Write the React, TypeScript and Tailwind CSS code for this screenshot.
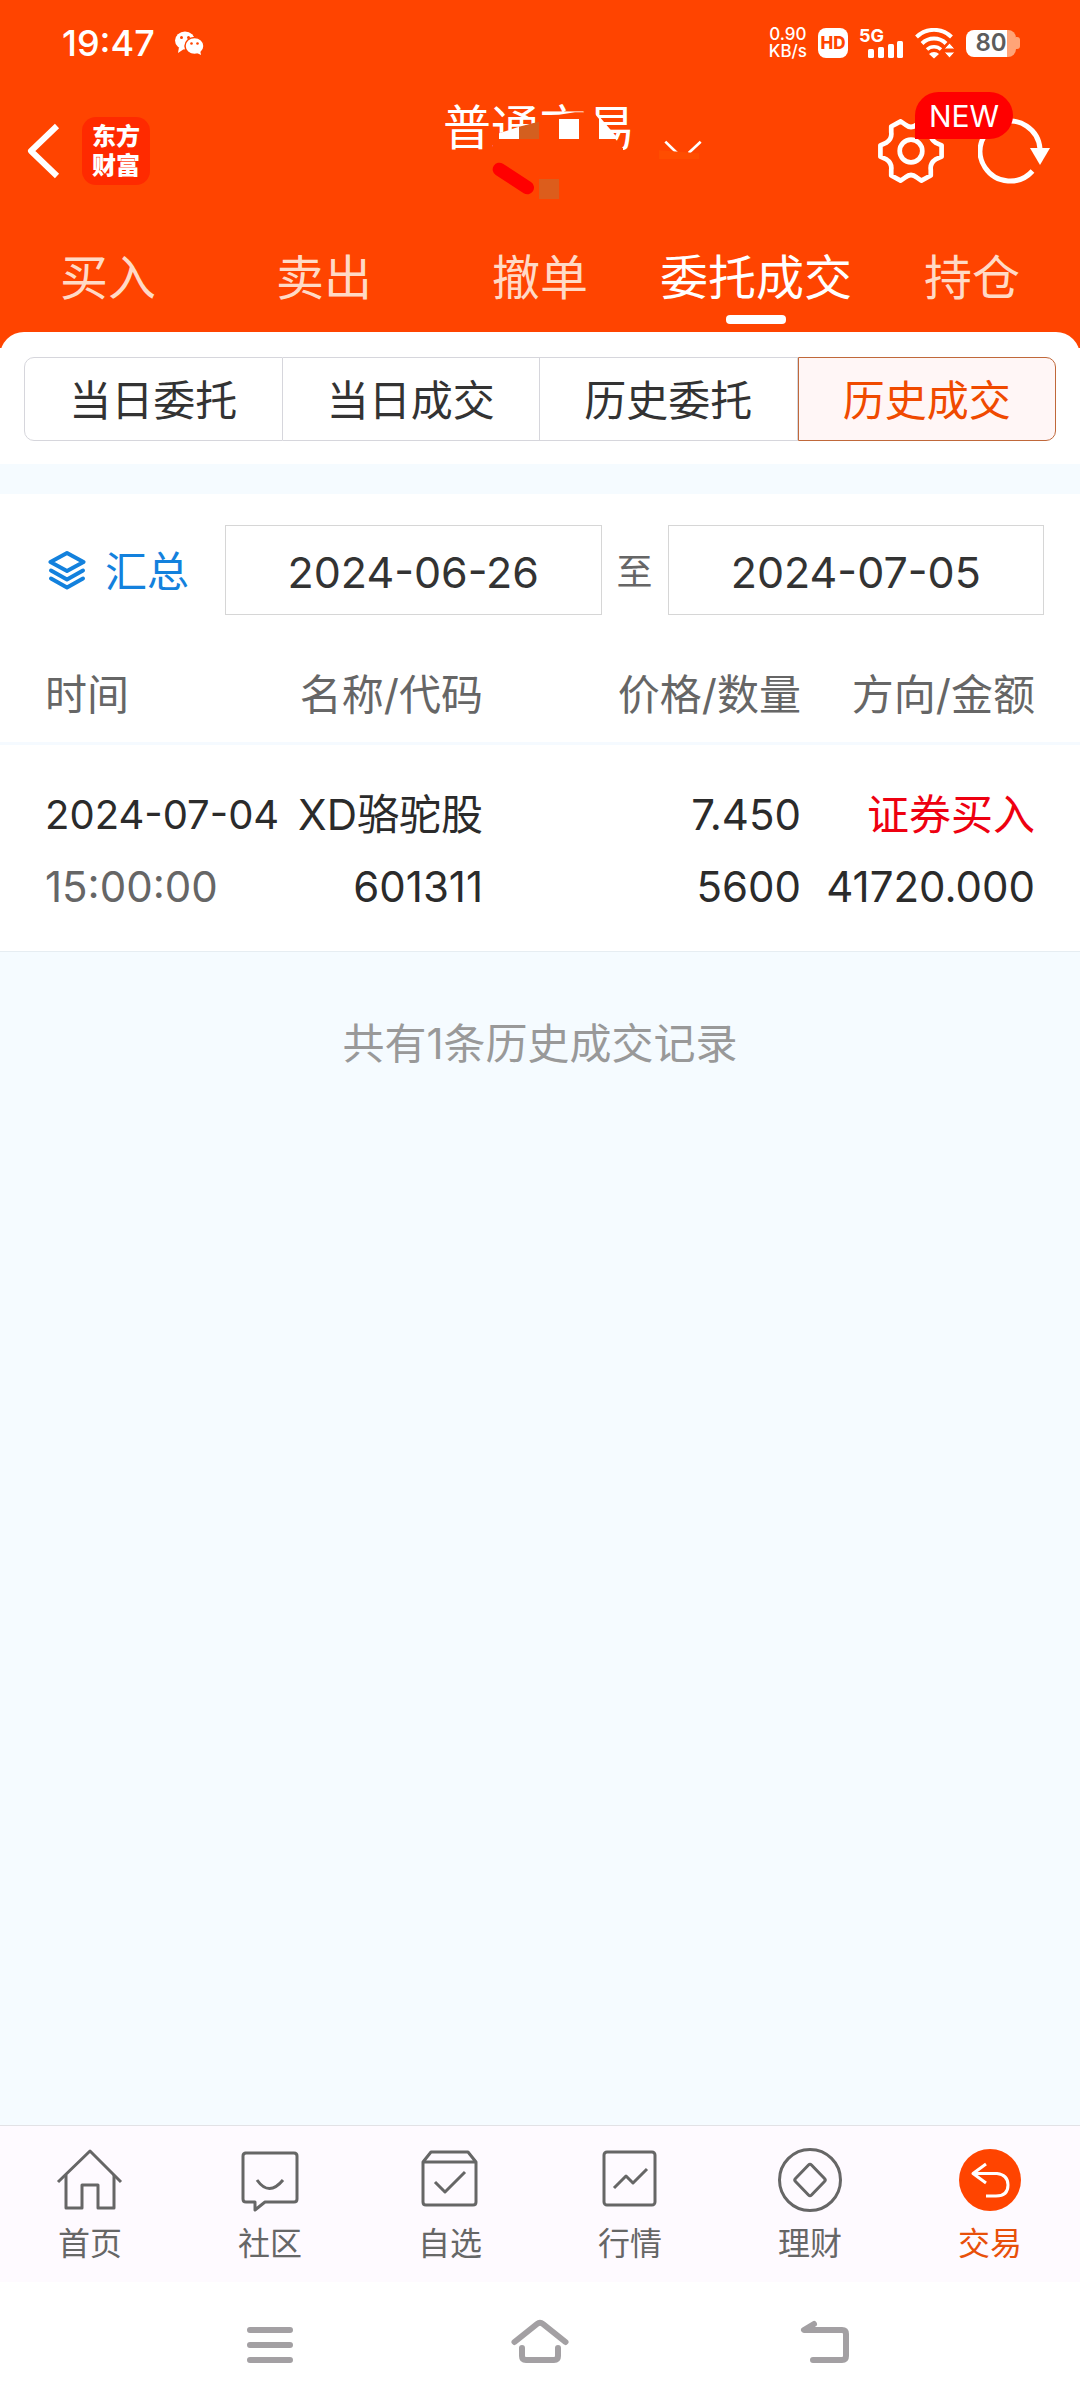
import React from "react";

const tabs = ["买入", "卖出", "撤单", "委托成交", "持仓"];
const segments = ["当日委托", "当日成交", "历史委托", "历史成交"];

function StatusBar() {
  return (
    <div className="flex h-[86px] items-center justify-between pl-[62px] pr-[60px] text-white">
      <div className="flex items-center gap-5">
        <span className="text-[36px] leading-none font-medium">19:47</span>
        <svg width="30" height="26" viewBox="0 0 30 26" aria-label="微信">
          <path d="M4 17 3 23 9 19Z" fill="#fff" />
          <ellipse cx="10" cy="10.500" rx="10" ry="9" fill="#fff" />
          <circle cx="6.500" cy="7.500" r="1.500" fill="#ff4400" />
          <circle cx="13.500" cy="7.500" r="1.500" fill="#ff4400" />
          <ellipse cx="19.500" cy="16" rx="9.500" ry="8.500" fill="#fff" stroke="#ff4400" strokeWidth="1.500" />
          <path d="m20 22 6 3-1-5Z" fill="#fff" />
          <circle cx="16.500" cy="13.500" r="1.300" fill="#ff4400" />
          <circle cx="22.500" cy="13.500" r="1.300" fill="#ff4400" />
        </svg>
      </div>
      <div className="flex items-center gap-[11px]">
        <div className="flex flex-col items-center text-[17px] leading-[17px] font-medium">
          <span>0.90</span>
          <span>KB/s</span>
        </div>
        <div className="flex size-[30px] items-center justify-center rounded-[8px] bg-white text-[17px] leading-none font-extrabold text-[#ff4400]">
          HD
        </div>
        <div className="relative h-[32px] w-[45px]">
          <span className="absolute left-0 top-0 text-[18px] leading-[18px] font-bold">5G</span>
          <svg className="absolute inset-0" width="45" height="32" viewBox="0 0 45 32" fill="#fff">
            <rect x="9" y="22" width="6" height="9" rx="1.500" />
            <rect x="19" y="20" width="6" height="11" rx="1.500" />
            <rect x="29" y="17" width="6" height="14" rx="1.500" />
            <rect x="38" y="14" width="6" height="17" rx="1.500" />
          </svg>
        </div>
        <svg width="40" height="31" viewBox="0 0 40 31" fill="none" stroke="#fff" strokeWidth="4">
          <path d="M1.500 9a25 25 0 0 1 35 0" />
          <path d="M7 15.500a17 17 0 0 1 24 0" />
          <path d="M12 21.500a10 10 0 0 1 14 0" strokeWidth="3.500" />
          <path d="m14 26 5 4.500 5-4.500a7 7 0 0 0-10 0Z" fill="#fff" stroke="none" />
          <path d="M29 21h11l-5.500-6ZM29 24h11l-5.500 6Z" fill="#fff" stroke="#ff4400" strokeWidth="1" />
        </svg>
        <div className="flex items-center">
          <div className="flex h-[27px] w-[50px] items-center justify-center overflow-hidden rounded-[8px] bg-linear-to-r from-white from-82% to-[#ffa477] to-82% text-[24px] leading-none font-semibold text-[#5c5c5c]">
            80
          </div>
          <div className="h-3 w-1 rounded-r-[3px] bg-[#ffa477]" />
        </div>
      </div>
    </div>
  );
}

function TitleBar() {
  return (
    <div className="grid h-[130px] grid-cols-[1fr_auto_1fr] items-center pl-[26px] pr-[28px]">
      <div className="flex items-center gap-[22px]">
        <button type="button" aria-label="返回">
          <svg width="34" height="56" viewBox="0 0 34 56" fill="none" stroke="#fff" strokeWidth="6">
            <path d="M31 3 5 28l26 25" strokeLinejoin="round" />
          </svg>
        </button>
        <div className="flex size-[68px] flex-col items-center justify-center rounded-[14px] bg-[#ff2a00] text-[24px] leading-[29px] font-black text-white">
          <span>东方</span>
          <span>财富</span>
        </div>
      </div>
      <button type="button" className="relative mb-[46px] text-[48px] leading-[56px] text-white">
        普通交易
        <svg className="absolute -left-6 -top-5" width="320" height="130" viewBox="0 0 960 390">
          <path d="M222 168 240 160 360 125 370 106 420 104 468 97H490L526 100 612 205V225H222Z" fill="#ff4400" />
          <path d="M240 160 300 140V177H240Z" fill="#fff" />
          <path d="M300 140 360 125V177H300Z" fill="#d45f1f" />
          <path d="M420 117h60v60h-60Z" fill="#fff" />
          <path d="M540 108 598 177H540Z" fill="#fff" />
          <path d="m739 185 35 34M845 185l-36 34" stroke="#fff" strokeWidth="8" fill="none" />
          <path d="M720 211 840 220V237H720Z" fill="#ff4d00" />
          <path d="m241 268 84 55" stroke="#ff0000" strokeWidth="40" strokeLinecap="round" />
          <path d="M360 297h60v60h-60Z" fill="#dc5d1c" />
        </svg>
      </button>
      <div className="flex items-center justify-end gap-[34px]">
        <button type="button" aria-label="设置" className="relative">
          <svg width="66" height="64" viewBox="0 0 70 68" fill="none" stroke="#fff" strokeWidth="5" strokeLinejoin="round">
            <path d="M2.500 28V40L9 43Q15 47 14 54V60L24 65.500 29 62Q35 57 41 62L46 65.500 56 60V54Q55 47 61 43L67.500 40V28L61 25Q55 21 56 14V8L46 2.500 41 6Q35 11 29 6L24 2.500 14 8V14Q15 21 9 25Z" />
            <circle cx="35" cy="34" r="12" />
          </svg>
          <span className="absolute -top-[27px] left-[37px] z-10 flex h-[47px] w-[98px] items-center justify-center rounded-full rounded-bl-none bg-[#ff0000] text-[30px] leading-none text-white">
            NEW
          </span>
        </button>
        <button type="button" aria-label="刷新">
          <svg width="74" height="68" viewBox="0 0 74 68" fill="none" stroke="#fff" strokeWidth="5">
            <path d="M54.500 54A30 30 0 1 1 62 32" />
            <path d="M52 31h20L62 48Z" fill="#fff" stroke="none" />
          </svg>
        </button>
      </div>
    </div>
  );
}

function Tabs() {
  return (
    <nav className="grid h-[132px] grid-cols-5">
      {tabs.map((t) => (
        <button
          key={t}
          type="button"
          className={
            t === "委托成交"
              ? "flex flex-col items-center pt-[32px] text-[48px] leading-[60px] whitespace-nowrap text-white"
              : "flex flex-col items-center pt-[32px] text-[48px] leading-[60px] whitespace-nowrap text-[#ffdac6]"
          }
        >
          {t}
          {t === "委托成交" && <span className="mt-[7px] h-[9px] w-[60px] rounded-[4px] bg-white" />}
        </button>
      ))}
    </nav>
  );
}

function Segments() {
  return (
    <div className="-mt-4 flex rounded-t-[24px] bg-white px-6 pt-[25px] pb-[23px]">
      {segments.map((s, i) => (
        <button
          key={s}
          type="button"
          className={
            i === 3
              ? "h-[84px] flex-1 rounded-r-[10px] border border-[#c0683a] bg-[#fff6f6] pt-1 text-[42px] leading-none text-[#f04a00]"
              : i === 0
                ? "h-[84px] flex-1 rounded-l-[10px] border border-[#d6d6dc] pt-1 text-[42px] leading-none text-[#333333]"
                : "h-[84px] flex-1 border-y border-r border-[#d6d6dc] pt-1 text-[42px] leading-none text-[#333333]"
          }
        >
          {s}
        </button>
      ))}
    </div>
  );
}

function Filters() {
  return (
    <div className="flex items-center pt-[31px] pr-9 pl-12">
      <button type="button" className="mr-9 flex items-center gap-[19px] text-[42px] leading-none whitespace-nowrap text-[#1381dd]">
        <svg width="38" height="40" viewBox="0 0 38 40" fill="none" stroke="#1381dd" strokeWidth="4" strokeLinejoin="round" strokeLinecap="round">
          <path d="M19 3 35.500 12 19 21 2.500 12Z" />
          <path d="M3 20.500 19 29.500 35 20.500M3 28.500 19 37.500 35 28.500" />
        </svg>
        <span className="pt-1">汇总</span>
      </button>
      <input
        type="text"
        readOnly
        aria-label="开始日期"
        defaultValue="2024-06-26"
        className="h-[90px] min-w-0 flex-1 border border-[#d6d6d6] pt-1 text-center text-[43px] text-[#333333] outline-none"
      />
      <span className="w-[66px] pt-1 text-center text-[36px] leading-none text-[#666666]">至</span>
      <input
        type="text"
        readOnly
        aria-label="结束日期"
        defaultValue="2024-07-05"
        className="h-[90px] min-w-0 flex-1 border border-[#d6d6d6] pt-1 text-center text-[43px] text-[#333333] outline-none"
      />
    </div>
  );
}

function Records() {
  return (
    <table className="mt-10 w-full table-fixed text-right text-[42px] leading-[60px] whitespace-nowrap text-[#2b2b2b]">
      <colgroup>
        <col className="w-[290px]" />
        <col className="w-[193px]" />
        <col className="w-[318px]" />
        <col />
      </colgroup>
      <thead>
        <tr className="h-[88px] border-b-3 border-[#f5faff] align-top text-[#666666]">
          <th scope="col" className="pt-[10px] pl-[45px] text-left font-normal">时间</th>
          <th scope="col" className="pt-[10px] font-normal">名称/代码</th>
          <th scope="col" className="pt-[10px] font-normal">价格/数量</th>
          <th scope="col" className="pt-[10px] pr-[45px] font-normal">方向/金额</th>
        </tr>
      </thead>
      <tbody>
        <tr className="border-b border-[#e6edf2] align-top">
          <td className="pt-[36px] pb-[26px] pl-[45px] text-left">
            <div className="h-[72px] pt-1 text-[40px]">2024-07-04</div>
            <div className="h-[72px] pt-1 text-[#666666]">15:00:00</div>
          </td>
          <td className="pt-[36px] pb-[26px]">
            <div className="flex h-[72px] justify-end pt-1">XD骆驼股</div>
            <div className="h-[72px] pt-1">601311</div>
          </td>
          <td className="pt-[36px] pb-[26px]">
            <div className="h-[72px] pt-1">7.450</div>
            <div className="h-[72px] pt-1">5600</div>
          </td>
          <td className="pt-[36px] pr-[45px] pb-[26px]">
            <div className="h-[72px] pt-1 text-[#ee0010]">证券买入</div>
            <div className="flex h-[72px] justify-end pt-1">41720.000</div>
          </td>
        </tr>
      </tbody>
    </table>
  );
}

const navItems = [
  {
    label: "首页",
    icon: (
      <g>
        <path d="M4 38 36 7 67 38" />
        <path d="M12 31V64H28V41H44V64H60V31" />
      </g>
    ),
  },
  {
    label: "社区",
    icon: (
      <g>
        <path d="M11 9H60Q63 9 63 12V55Q63 58 60 58H31L21 66V58H12Q9 58 9 55V12Q9 9 12 9Z" />
        <path d="M23 36Q35 53 49 36" />
      </g>
    ),
  },
  {
    label: "自选",
    icon: (
      <g>
        <path d="M9 18 17 8H54L62 18V58Q62 61 59 61H12Q9 61 9 58ZM9 18H62" />
        <path d="M21 38 31 48 51 28" />
      </g>
    ),
  },
  {
    label: "行情",
    icon: (
      <g>
        <rect x="10" y="8" width="51" height="53" rx="3" />
        <path d="M20 44 32 32 39 39 53 25" />
      </g>
    ),
  },
  {
    label: "理财",
    icon: (
      <g>
        <circle cx="36" cy="36" r="30.500" />
        <path d="M37.500 21 50.500 34.500Q52 36 50.500 37.500L37.500 51Q36 52.500 34.500 51L21.500 37.500Q20 36 21.500 34.500L34.500 21Q36 19.500 37.500 21Z" />
      </g>
    ),
  },
  {
    label: "交易",
    icon: (
      <g>
        <circle cx="36" cy="36" r="31" fill="#ff4400" stroke="none" />
        <path d="M32 20 19 29.500 32 39M20 29.500H43Q54 31 54 41 54 52 42 52H32" stroke="#fff" />
      </g>
    ),
  },
];

function BottomNav() {
  return (
    <nav className="grid grid-cols-6 border-t border-[#e2e2e6] bg-[#fefaff]">
      {navItems.map((n) => (
        <a
          key={n.label}
          href="#"
          className={
            n.label === "交易"
              ? "flex h-[156px] flex-col items-center pt-[18px] text-[32px] leading-[48px] text-[#e8500a]"
              : "flex h-[156px] flex-col items-center pt-[18px] text-[32px] leading-[48px] text-[#666666]"
          }
        >
          <svg width="72" height="72" viewBox="0 0 72 72" fill="none" stroke="#666666" strokeWidth="3" strokeLinejoin="round">
            {n.icon}
          </svg>
          <span className="mt-1">{n.label}</span>
        </a>
      ))}
    </nav>
  );
}

function SystemNav() {
  return (
    <div className="grid h-[126px] grid-cols-3 items-center bg-white px-[12.5%]">
      <button type="button" aria-label="最近任务" className="flex justify-center">
        <svg width="96" height="54" viewBox="0 0 96 54" stroke="#a3a0a3" strokeWidth="6" strokeLinecap="round">
          <path d="M28 12H68M28 27H68M28 42H68" />
        </svg>
      </button>
      <button type="button" aria-label="主屏幕" className="flex justify-center">
        <svg width="96" height="54" viewBox="0 0 96 54" fill="none" stroke="#a3a0a3" strokeWidth="6" strokeLinecap="round" strokeLinejoin="round">
          <path d="M22.500 24 45 6Q48 3.500 51 6L73.500 24M30 30V38Q30 42 34 42H62Q66 42 66 38V30" />
        </svg>
      </button>
      <button type="button" aria-label="返回上一级" className="flex justify-center">
        <svg width="96" height="54" viewBox="0 0 96 54" fill="none" stroke="#a3a0a3" strokeWidth="6" strokeLinecap="round" strokeLinejoin="round">
          <path d="M52 6 42 12H80Q84 12 84 16V38Q84 42 80 42H51" />
        </svg>
      </button>
    </div>
  );
}

export default function App() {
  return (
    <div lang="zh-CN" className="flex min-h-screen flex-col bg-white font-['Inter','Noto_Sans_CJK_SC',sans-serif]">
      <header className="bg-[#ff4400]">
        <StatusBar />
        <TitleBar />
        <Tabs />
      </header>
      <main className="flex flex-1 flex-col">
        <Segments />
        <div className="h-[30px] bg-[#f5fbff]" />
        <section>
          <Filters />
          <Records />
        </section>
        <div className="flex-1 bg-[#f5fbff] pt-[62px] text-center text-[42px] leading-[60px] text-[#999999]">
          共有1条历史成交记录
        </div>
      </main>
      <BottomNav />
      <SystemNav />
    </div>
  );
}
